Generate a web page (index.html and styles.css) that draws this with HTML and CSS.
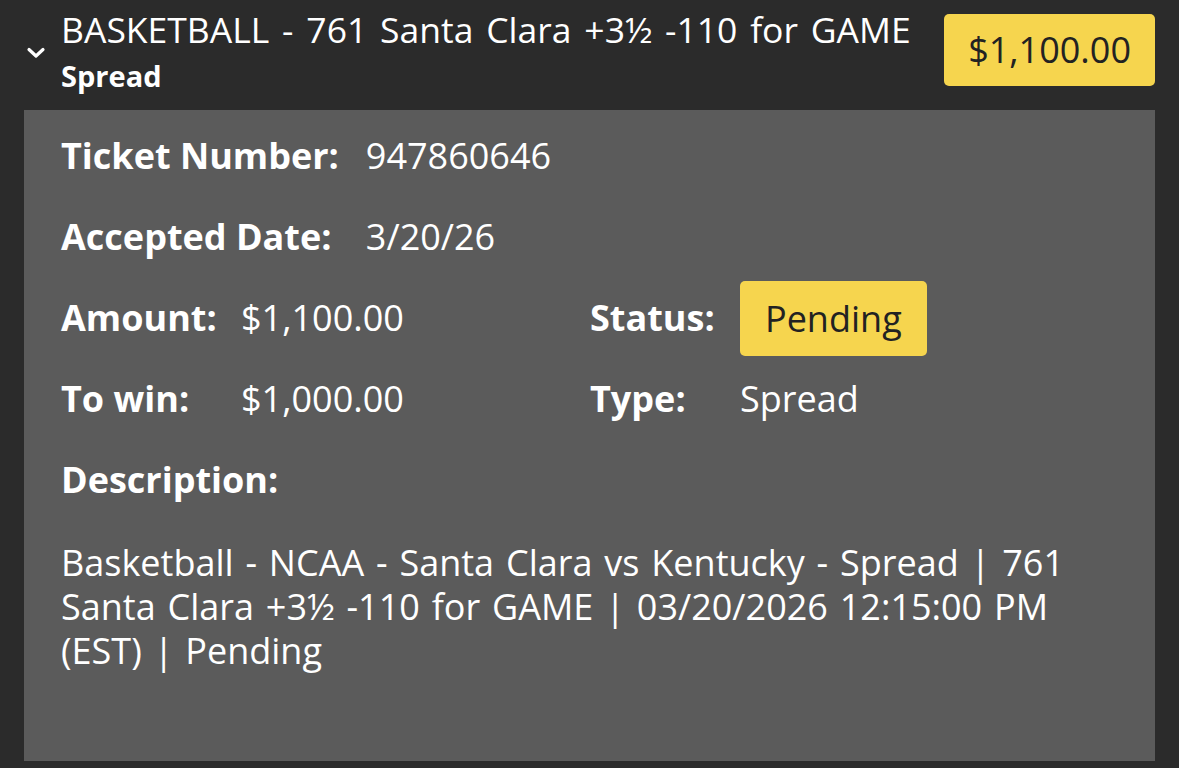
FILE: index.html
```html
<!DOCTYPE html>
<html lang="en">
<head>
<meta charset="utf-8">
<title>Bet ticket</title>
<link rel="stylesheet" href="styles.css">
</head>
<body>
<div class="card">
  <div class="header">
    <div class="chev">
      <svg width="20" height="12" viewBox="0 0 20 12"><path d="M3 2.5 L10 9 L17 2.5" fill="none" stroke="#fff" stroke-width="3.2" stroke-linecap="round" stroke-linejoin="round"/></svg>
    </div>
    <div class="titles">
      <div class="title">BASKETBALL - 761 Santa Clara +3½ -110 for GAME</div>
      <div class="subtitle">Spread</div>
    </div>
    <div class="amount-btn">$1,100.00</div>
  </div>
  <div class="panel">
    <div class="pair-grid">
      <div class="label">Ticket Number:</div>
      <div class="value">947860646</div>
      <div class="label">Accepted Date:</div>
      <div class="value">3/20/26</div>
    </div>
    <div class="quad-grid">
      <div class="label">Amount:</div>
      <div class="value">$1,100.00</div>
      <div class="label">Status:</div>
      <div class="value"><span class="badge">Pending</span></div>
      <div class="label">To win:</div>
      <div class="value">$1,000.00</div>
      <div class="label">Type:</div>
      <div class="value">Spread</div>
    </div>
    <div class="desc-row label">Description:</div>
    <div class="desc">Basketball - NCAA - Santa Clara vs Kentucky - Spread | 761 Santa Clara +3½ -110 for GAME | 03/20/2026 12:15:00 PM (EST) | Pending</div>
  </div>
</div>
</body>
</html>
```

FILE: styles.css
```css
html, body {
  margin: 0;
  padding: 0;
  background: #2b2b2b;
}
body {
  font-family: "Open Sans", "Noto Sans", sans-serif;
  color: #ffffff;
  width: 1179px;
  height: 768px;
  overflow: hidden;
}
.card {
  padding: 0 24px;
}
.header {
  display: flex;
  align-items: center;
  padding: 6px 0 16px 0;
}
.chev {
  width: 37px;
  flex: 0 0 37px;
  display: flex;
  align-items: center;
  padding-top: 5px;
}
.chev svg {
  display: block;
  margin-left: 2px;
}
.titles {
  flex: 1 1 auto;
  min-width: 0;
}
.title {
  font-size: 35.5px;
  line-height: 46px;
  word-spacing: 3.6px;
  white-space: nowrap;
}
.subtitle {
  font-size: 29px;
  font-weight: 700;
  line-height: 36px;
  margin-top: 6px;
}
.amount-btn {
  flex: 0 0 auto;
  background: #f6d54e;
  color: #222222;
  font-size: 36px;
  line-height: 72px;
  height: 72px;
  padding: 0 24px;
  border-radius: 5px;
}
.panel {
  background: #5b5b5b;
  height: 651px;
  box-sizing: border-box;
  padding: 5px 37px 0 37px;
}
.label {
  font-weight: 700;
}
.pair-grid {
  display: grid;
  grid-template-columns: max-content 1fr;
  column-gap: 27px;
  grid-auto-rows: 81px;
  align-items: center;
  font-size: 36px;
}
.quad-grid {
  display: grid;
  grid-template-columns: 180px 349px 150px 1fr;
  grid-auto-rows: 81px;
  align-items: center;
  font-size: 36px;
}
.badge {
  display: inline-block;
  background: #f6d54e;
  color: #222222;
  line-height: 75px;
  height: 75px;
  padding: 0 25px;
  border-radius: 5px;
  margin-top: 1px;
}
.desc-row {
  font-size: 36px;
  height: 81px;
  display: flex;
  align-items: center;
}
.desc {
  font-size: 36px;
  line-height: 44px;
  word-spacing: 2.5px;
  margin-top: 21px;
}
```
